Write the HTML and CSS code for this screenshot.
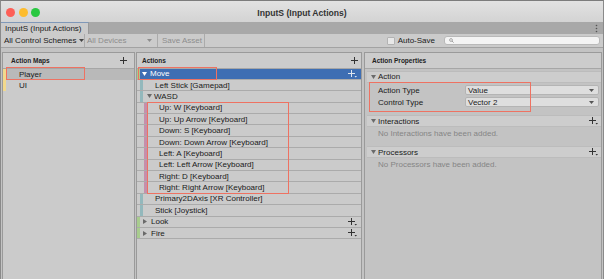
FILE: index.html
```html
<!DOCTYPE html>
<html lang="en">
<head>
    <meta charset="UTF-8">
    <title>InputS (Input Actions)</title>
    <link rel="stylesheet" href="styles.css">
</head>
<body>
<div class="window">
    <div class="titlebar">
        <div class="lights">
            <span class="light red"></span>
            <span class="light yellow"></span>
            <span class="light green"></span>
        </div>
        <div class="title">InputS (Input Actions)</div>
        <div></div>
    </div>

    <div class="tabbar">
        <div class="tab">InputS (Input Actions)</div>
        <svg class="kebab" width="3" height="9" viewBox="0 0 3 9"><circle cx="1.5" cy="1.5" r="0.8"/><circle cx="1.5" cy="4.5" r="0.8"/><circle cx="1.5" cy="7.5" r="0.8"/></svg>
    </div>

    <div class="toolbar">
        <div class="tb-item schemes">All Control Schemes <svg class="caret" width="5" height="3" viewBox="0 0 5 3"><polygon points="0,0 5,0 2.5,3"/></svg></div>
        <div class="tb-item devices disabled">All Devices <svg class="caret" width="5" height="3" viewBox="0 0 5 3"><polygon points="0,0 5,0 2.5,3"/></svg></div>
        <div class="tb-item save disabled">Save Asset</div>
        <div class="spacer"></div>
        <label class="autosave"><span class="checkbox"></span>Auto-Save</label>
        <div class="search">
            <svg width="5" height="5" viewBox="0 0 5 5"><circle cx="2" cy="2" r="1.4" fill="none" stroke="#8a8a8a" stroke-width="0.7"/><line x1="3" y1="3" x2="4.6" y2="4.6" stroke="#8a8a8a" stroke-width="0.8"/></svg>
        </div>
    </div>

    <div class="panels">
        <!-- Action Maps -->
        <section class="panel maps">
            <div class="panel-head">
                <span>Action Maps</span>
                <svg class="plus" width="7" height="7" viewBox="0 0 7 7"><path d="M3.5 0v7M0 3.5h7"/></svg>
            </div>
            <div class="map-row selected"><span class="bar"></span><span class="label">Player</span></div>
            <div class="map-row"><span class="bar"></span><span class="label">UI</span></div>
            <div class="mark mark-player"></div>
        </section>

        <!-- Actions -->
        <section class="panel actions">
            <div class="panel-head">
                <span>Actions</span>
                <svg class="plus" width="7" height="7" viewBox="0 0 7 7"><path d="M3.5 0v7M0 3.5h7"/></svg>
            </div>
            <div class="row lv0 selected">
                <span class="bar"></span>
                <svg class="tri down" width="5" height="4" viewBox="0 0 5 4"><polygon points="0,0 5,0 2.5,4"/></svg>
                <span class="label">Move</span>
                <svg class="add" width="9" height="8" viewBox="0 0 9 8"><path d="M3.5 0v7M0 3.5h7"/><polygon points="6.5,6 9,6 7.75,7.5"/></svg>
            </div>
            <div class="row lv1"><span class="bar"></span><span class="label">Left Stick [Gamepad]</span></div>
            <div class="row lv1 composite">
                <span class="bar"></span>
                <svg class="tri down" width="5" height="4" viewBox="0 0 5 4"><polygon points="0,0 5,0 2.5,4"/></svg>
                <span class="label">WASD</span>
            </div>
            <div class="row lv2"><span class="bar"></span><span class="label">Up: W [Keyboard]</span></div>
            <div class="row lv2"><span class="bar"></span><span class="label">Up: Up Arrow [Keyboard]</span></div>
            <div class="row lv2"><span class="bar"></span><span class="label">Down: S [Keyboard]</span></div>
            <div class="row lv2"><span class="bar"></span><span class="label">Down: Down Arrow [Keyboard]</span></div>
            <div class="row lv2"><span class="bar"></span><span class="label">Left: A [Keyboard]</span></div>
            <div class="row lv2"><span class="bar"></span><span class="label">Left: Left Arrow [Keyboard]</span></div>
            <div class="row lv2"><span class="bar"></span><span class="label">Right: D [Keyboard]</span></div>
            <div class="row lv2"><span class="bar"></span><span class="label">Right: Right Arrow [Keyboard]</span></div>
            <div class="row lv1"><span class="bar"></span><span class="label">Primary2DAxis [XR Controller]</span></div>
            <div class="row lv1"><span class="bar"></span><span class="label">Stick [Joystick]</span></div>
            <div class="row lv0 closed">
                <span class="bar"></span>
                <svg class="tri right" width="4" height="5" viewBox="0 0 4 5"><polygon points="0,0 4,2.5 0,5"/></svg>
                <span class="label">Look</span>
                <svg class="add" width="9" height="8" viewBox="0 0 9 8"><path d="M3.5 0v7M0 3.5h7"/><polygon points="6.5,6 9,6 7.75,7.5"/></svg>
            </div>
            <div class="row lv0 closed">
                <span class="bar"></span>
                <svg class="tri right" width="4" height="5" viewBox="0 0 4 5"><polygon points="0,0 4,2.5 0,5"/></svg>
                <span class="label">Fire</span>
                <svg class="add" width="9" height="8" viewBox="0 0 9 8"><path d="M3.5 0v7M0 3.5h7"/><polygon points="6.5,6 9,6 7.75,7.5"/></svg>
            </div>
            <div class="mark mark-move"></div>
            <div class="mark mark-parts"></div>
        </section>

        <!-- Action Properties -->
        <section class="panel props">
            <div class="panel-head">
                <span>Action Properties</span>
            </div>
            <div class="props-body">
                <div class="fold first">
                    <svg class="tri down" width="5" height="4" viewBox="0 0 5 4"><polygon points="0,0 5,0 2.5,4"/></svg>
                    <span>Action</span>
                </div>
                <div class="prop">
                    <span class="prop-label">Action Type</span>
                    <div class="dropdown">Value <svg class="caret" width="5" height="3" viewBox="0 0 5 3"><polygon points="0,0 5,0 2.5,3"/></svg></div>
                </div>
                <div class="prop">
                    <span class="prop-label">Control Type</span>
                    <div class="dropdown">Vector 2 <svg class="caret" width="5" height="3" viewBox="0 0 5 3"><polygon points="0,0 5,0 2.5,3"/></svg></div>
                </div>

                <div class="fold">
                    <svg class="tri down" width="5" height="4" viewBox="0 0 5 4"><polygon points="0,0 5,0 2.5,4"/></svg>
                    <span>Interactions</span>
                    <svg class="add" width="9" height="8" viewBox="0 0 9 8"><path d="M3.5 0v7M0 3.5h7"/><polygon points="6.5,6 9,6 7.75,7.5"/></svg>
                </div>
                <div class="empty">No Interactions have been added.</div>

                <div class="fold">
                    <svg class="tri down" width="5" height="4" viewBox="0 0 5 4"><polygon points="0,0 5,0 2.5,4"/></svg>
                    <span>Processors</span>
                    <svg class="add" width="9" height="8" viewBox="0 0 9 8"><path d="M3.5 0v7M0 3.5h7"/><polygon points="6.5,6 9,6 7.75,7.5"/></svg>
                </div>
                <div class="empty">No Processors have been added.</div>
            </div>
            <div class="mark mark-props"></div>
        </section>
    </div>
</div>
</body>
</html>
```

FILE: styles.css
```css
* {
    box-sizing: border-box;
}

html, body {
    margin: 0;
}

body {
    font-family: "Liberation Sans", Arial, sans-serif;
    font-size: 8px;
    color: #1a1a1a;
    background: #c3c3c3;
    white-space: nowrap;
}

.window {
    width: 604px;
    height: 279px;
    overflow: hidden;
    display: flex;
    flex-direction: column;
    border-top: 1px solid #7c7c7c;
    border-left: 1px solid #8a8a8a;
    border-right: 1px solid #8a8a8a;
    background: #c3c3c3;
}

/* Title bar */
.titlebar {
    height: 21px;
    flex: none;
    display: grid;
    grid-template-columns: 1fr auto 1fr;
    align-items: center;
    padding-top: 2px;
    background: linear-gradient(#e2e2e2, #d3d3d3);
}

.lights {
    display: flex;
    gap: 3.5px;
    padding-left: 5px;
}

.light {
    width: 9px;
    height: 9px;
    border-radius: 50%;
}

.red { background: #fd5f57; }
.yellow { background: #fdbc2e; }
.green { background: #29c841; }

.title {
    font-weight: bold;
    font-size: 8.6px;
    color: #333;
}

/* Tab bar */
.tabbar {
    height: 12px;
    flex: none;
    display: flex;
    align-items: stretch;
    background: #a8a8a8;
}

.tab {
    width: 88px;
    padding-left: 4px;
    display: flex;
    align-items: center;
    background: #cbcbcb;
    border-top: 1px solid #7f98b8;
    border-right: 1px solid #999;
}

.kebab {
    margin: auto 5px auto auto;
    fill: #555;
}

/* Toolbar */
.toolbar {
    height: 14px;
    flex: none;
    display: flex;
    align-items: stretch;
    background: #cbcbcb;
    border-bottom: 1px solid #a2a2a2;
}

.tb-item {
    display: flex;
    align-items: center;
    border-right: 1px solid #ababab;
}

.tb-item .caret {
    flex: none;
    fill: #444;
}

.schemes {
    width: 84px;
    padding-left: 3px;
    gap: 3px;
}

.devices {
    width: 73px;
    padding: 0 5px 0 2px;
    justify-content: space-between;
}

.save {
    width: 47px;
    padding-left: 4px;
}

.disabled {
    color: #8d8d8d;
}

.disabled .caret {
    fill: #8d8d8d;
}

.spacer {
    flex: 1;
}

.autosave {
    display: flex;
    align-items: center;
    gap: 3px;
    margin-right: 9px;
}

.checkbox {
    width: 8px;
    height: 8px;
    border: 1px solid #b3b3b3;
    border-radius: 1px;
    background: #e8e8e8;
}

.search {
    width: 156px;
    margin: 2px 3px 2px 0;
    padding-left: 4px;
    display: flex;
    align-items: center;
    background: #f4f4f4;
    border: 1px solid #b9b9b9;
    border-radius: 3px;
}

/* Panels */
.panels {
    height: 240px;
    flex: none;
    display: flex;
    padding: 4px 1px 0 1px;
}

.panel {
    position: relative;
    border: 1px solid #9a9a9a;
    background: #cbcbcb;
}

.maps {
    width: 133px;
    margin-right: 1px;
}

.actions {
    width: 226px;
    margin-right: 2px;
}

.props {
    flex: 1;
    display: flex;
    flex-direction: column;
}

.panel-head {
    height: 15.5px;
    flex: none;
    display: flex;
    align-items: center;
    justify-content: space-between;
    font-weight: bold;
    font-size: 6.5px;
    color: #222;
    border-bottom: 1px solid #a6a6a6;
    background: #cccccc;
}

.maps .panel-head {
    padding: 0 7px 0 8px;
}

.actions .panel-head {
    padding: 0 3px 0 5px;
}

.props .panel-head {
    padding: 0 7px;
}

.plus {
    stroke: #333;
    stroke-width: 1;
}

/* Action map rows */
.map-row {
    height: 11.4px;
    display: flex;
    align-items: center;
}

.map-row .bar {
    width: 3px;
    align-self: stretch;
    background: #f2d98c;
}

.map-row .label {
    margin-left: 13px;
}

.map-row.selected {
    background: #b9b9b9;
}

/* Action tree rows */
.row {
    height: 11.4px;
    display: flex;
    align-items: center;
    border-bottom: 1px solid #ababab;
}

.row .bar {
    width: 3px;
    align-self: stretch;
}

.lv0 .bar {
    background: #a8cc8e;
}

.lv1 .bar {
    margin-left: 3px;
    background: #93b8bc;
}

.lv2 .bar {
    margin-left: 7px;
    background: #c58fab;
}

.tri {
    flex: none;
    fill: #6a6a6a;
}

.lv0 .tri.down {
    margin-left: 2px;
}

.lv0 .tri + .label {
    margin-left: 3px;
}

.lv0 .tri.right {
    margin-left: 3px;
}

.lv0.closed .label {
    margin-left: 4px;
}

.lv1 .label,
.lv2 .label {
    margin-left: 12px;
}

.lv1.composite .tri {
    margin-left: 4px;
}

.lv1.composite .label {
    margin-left: 2px;
}

.row.selected {
    background: #3e6eb3;
    color: #fff;
}

.row.selected .tri {
    fill: #fff;
}

.add {
    flex: none;
    margin-left: auto;
    margin-right: 4px;
    stroke: #333;
    stroke-width: 1;
    fill: #333;
}

.add polygon {
    stroke: none;
}

.row.selected .add {
    stroke: #dfe6ef;
    fill: #dfe6ef;
}

/* Properties */
.props-body {
    flex: 1;
    background: #c3c3c3;
}

.fold {
    height: 12px;
    margin: 7px 0 0 2px;
    padding-left: 4px;
    display: flex;
    align-items: center;
    gap: 2px;
    background: #cdcdcd;
    border-top: 1px solid #bcbcbc;
    border-bottom: 1px solid #bcbcbc;
}

.fold.first {
    margin-top: 2px;
}

.fold .add {
    margin-right: 3px;
}

.prop {
    height: 12px;
    display: flex;
    align-items: center;
    padding-left: 13px;
}

.fold.first + .prop {
    margin-top: 1.5px;
}

.prop-label {
    width: 87px;
}

.dropdown {
    flex: 1;
    height: 10px;
    margin-right: 2px;
    padding: 0 4px 0 2px;
    display: flex;
    align-items: center;
    justify-content: space-between;
    background: #dedede;
    border: 1px solid #b4b4b4;
    border-radius: 2px;
}

.dropdown .caret {
    fill: #555;
}

.empty {
    height: 12px;
    display: flex;
    align-items: center;
    padding-left: 13px;
    color: #858585;
}

/* Red annotation boxes drawn over the screenshot */
.mark {
    position: absolute;
    border: 1.5px solid #ee7262;
    pointer-events: none;
}

.mark-player {
    left: 3px;
    top: 13.5px;
    width: 79px;
    height: 13.5px;
}

.mark-move {
    left: 0.5px;
    top: 13.5px;
    width: 79px;
    height: 13px;
}

.mark-parts {
    left: 10px;
    top: 49px;
    width: 142px;
    height: 92px;
}

.mark-props {
    left: 4px;
    top: 29px;
    width: 162px;
    height: 30px;
}
```
